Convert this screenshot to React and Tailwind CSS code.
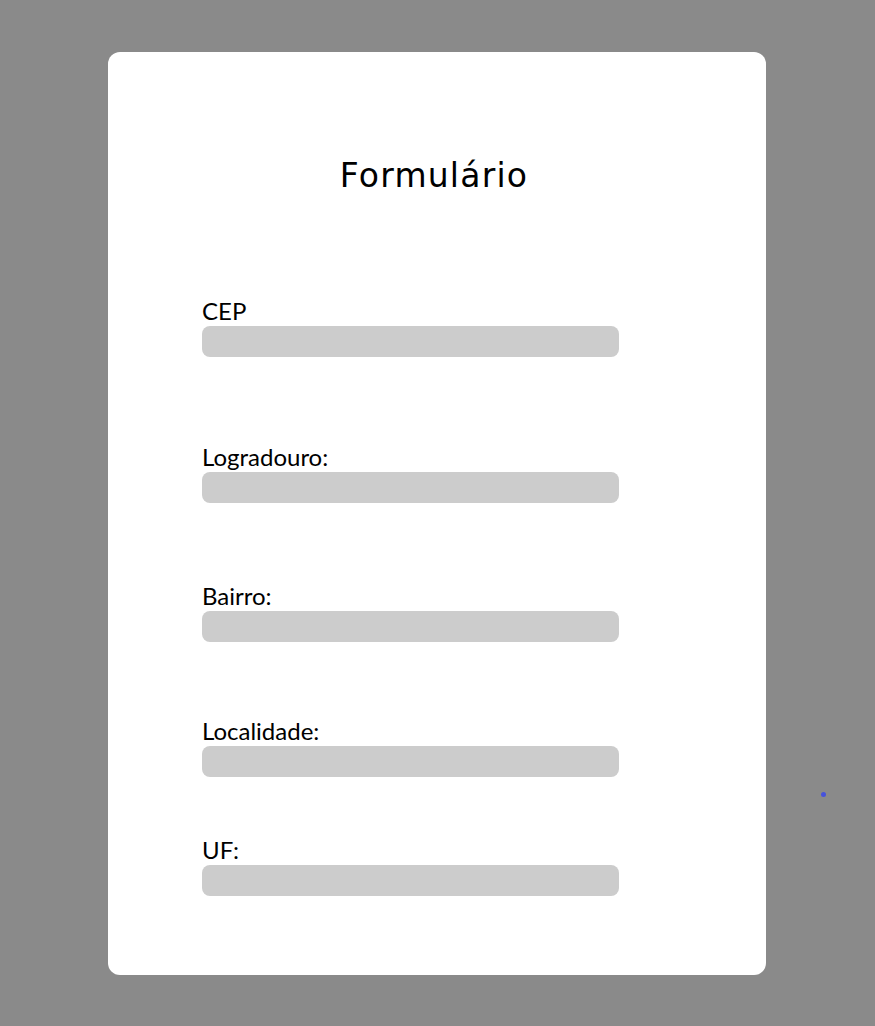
export default function App() {
  const fields = [
    { label: "CEP", mt: "mt-[101px]" },
    { label: "Logradouro:", mt: "mt-[86px]" },
    { label: "Bairro:", mt: "mt-[79px]" },
    { label: "Localidade:", mt: "mt-[75px]" },
    { label: "UF:", mt: "mt-[59px]" },
  ];
  return (
    <div className="min-h-screen w-full bg-[#8a8a8a] pt-[52px] pb-[51px] relative">
      <div className="ml-[108px] w-[658px] h-[923px] rounded-[12px] bg-white pt-[104px] box-border">
        <h1 className="text-center text-[33px] leading-[40px] font-medium tracking-[1.2px] text-black pr-[6px]" style={{ fontFamily: "'DejaVu Sans', 'Noto Sans', sans-serif" }}>
          Formulário
        </h1>
        <form className="pl-[94px] flex flex-col">
          {fields.map((f) => (
            <div key={f.label} className={`${f.mt} flex flex-col`}>
              <label className="text-[24px] leading-[28px] text-black" style={{ fontFamily: "Lato, 'Liberation Sans', sans-serif" }}>
                {f.label}
              </label>
              <input className="mt-[1px] w-[417px] h-[31px] rounded-[8px] bg-[#cccccc] border-0 outline-none" />
            </div>
          ))}
        </form>
      </div>
      <div className="absolute left-[821px] top-[792px] w-[5px] h-[5px] rounded-full bg-[#4652dc]" />
    </div>
  );
}
